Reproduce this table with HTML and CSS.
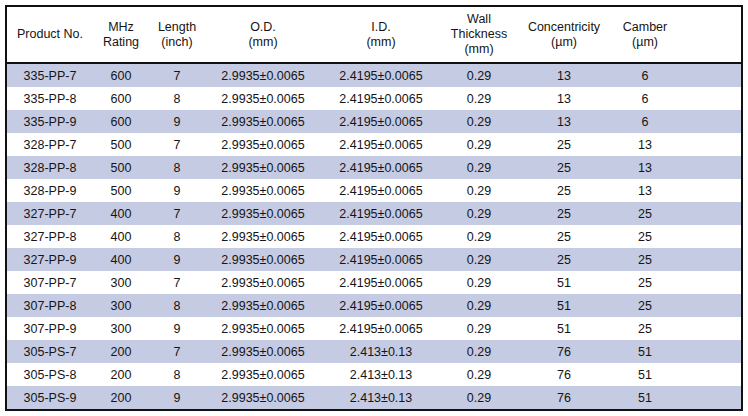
FILE: index.html
```html
<!DOCTYPE html>
<html lang="en">
<head>
<meta charset="utf-8">
<title>Product Table</title>
<link rel="stylesheet" href="styles.css">
</head>
<body>
<div class="frame">
<table class="spec">
<colgroup>
<col class="c-prod"><col class="c-mhz"><col class="c-len"><col class="c-od"><col class="c-id"><col class="c-wall"><col class="c-conc"><col class="c-camb"><col class="c-rest">
</colgroup>
<thead>
<tr>
<th>Product No.</th>
<th>MHz<br>Rating</th>
<th>Length<br>(inch)</th>
<th>O.D.<br>(mm)</th>
<th>I.D.<br>(mm)</th>
<th>Wall<br>Thickness<br>(mm)</th>
<th>Concentricity<br>(µm)</th>
<th>Camber<br>(µm)</th>
<th></th>
</tr>
</thead>
<tbody>
<tr class="alt"><td>335-PP-7</td><td>600</td><td>7</td><td>2.9935±0.0065</td><td>2.4195±0.0065</td><td>0.29</td><td>13</td><td>6</td><td></td></tr>
<tr><td>335-PP-8</td><td>600</td><td>8</td><td>2.9935±0.0065</td><td>2.4195±0.0065</td><td>0.29</td><td>13</td><td>6</td><td></td></tr>
<tr class="alt"><td>335-PP-9</td><td>600</td><td>9</td><td>2.9935±0.0065</td><td>2.4195±0.0065</td><td>0.29</td><td>13</td><td>6</td><td></td></tr>
<tr><td>328-PP-7</td><td>500</td><td>7</td><td>2.9935±0.0065</td><td>2.4195±0.0065</td><td>0.29</td><td>25</td><td>13</td><td></td></tr>
<tr class="alt"><td>328-PP-8</td><td>500</td><td>8</td><td>2.9935±0.0065</td><td>2.4195±0.0065</td><td>0.29</td><td>25</td><td>13</td><td></td></tr>
<tr><td>328-PP-9</td><td>500</td><td>9</td><td>2.9935±0.0065</td><td>2.4195±0.0065</td><td>0.29</td><td>25</td><td>13</td><td></td></tr>
<tr class="alt"><td>327-PP-7</td><td>400</td><td>7</td><td>2.9935±0.0065</td><td>2.4195±0.0065</td><td>0.29</td><td>25</td><td>25</td><td></td></tr>
<tr><td>327-PP-8</td><td>400</td><td>8</td><td>2.9935±0.0065</td><td>2.4195±0.0065</td><td>0.29</td><td>25</td><td>25</td><td></td></tr>
<tr class="alt"><td>327-PP-9</td><td>400</td><td>9</td><td>2.9935±0.0065</td><td>2.4195±0.0065</td><td>0.29</td><td>25</td><td>25</td><td></td></tr>
<tr><td>307-PP-7</td><td>300</td><td>7</td><td>2.9935±0.0065</td><td>2.4195±0.0065</td><td>0.29</td><td>51</td><td>25</td><td></td></tr>
<tr class="alt"><td>307-PP-8</td><td>300</td><td>8</td><td>2.9935±0.0065</td><td>2.4195±0.0065</td><td>0.29</td><td>51</td><td>25</td><td></td></tr>
<tr><td>307-PP-9</td><td>300</td><td>9</td><td>2.9935±0.0065</td><td>2.4195±0.0065</td><td>0.29</td><td>51</td><td>25</td><td></td></tr>
<tr class="alt"><td>305-PS-7</td><td>200</td><td>7</td><td>2.9935±0.0065</td><td>2.413±0.13</td><td>0.29</td><td>76</td><td>51</td><td></td></tr>
<tr><td>305-PS-8</td><td>200</td><td>8</td><td>2.9935±0.0065</td><td>2.413±0.13</td><td>0.29</td><td>76</td><td>51</td><td></td></tr>
<tr class="alt"><td>305-PS-9</td><td>200</td><td>9</td><td>2.9935±0.0065</td><td>2.413±0.13</td><td>0.29</td><td>76</td><td>51</td><td></td></tr>
</tbody>
</table>
</div>
</body>
</html>
```

FILE: styles.css
```css
html, body {
  margin: 0;
  padding: 0;
  background: #ffffff;
}
body {
  padding: 5px;
  font-family: "Liberation Sans", Arial, Helvetica, sans-serif;
  color: #161414;
}
.frame {
  width: 734px;
  border: 2px solid #111111;
}
.spec {
  width: 734px;
  border-collapse: collapse;
  table-layout: fixed;
  font-size: 12.5px;
}
.c-prod { width: 86px; }
.c-mhz { width: 56px; }
.c-len { width: 56px; }
.c-od { width: 116px; }
.c-id { width: 120px; }
.c-wall { width: 76px; }
.c-conc { width: 94px; }
.c-camb { width: 68px; }
.c-rest { width: 62px; }
.spec th {
  height: 55px;
  padding: 0;
  font-weight: normal;
  line-height: 15px;
  text-align: center;
  vertical-align: middle;
  border-bottom: 2px solid #111111;
  white-space: nowrap;
}
.spec td {
  height: 23px;
  padding: 0;
  text-align: center;
  vertical-align: middle;
  line-height: 14px;
  white-space: nowrap;
}
.spec tr.alt td {
  background: #c5cbe3;
}
```
